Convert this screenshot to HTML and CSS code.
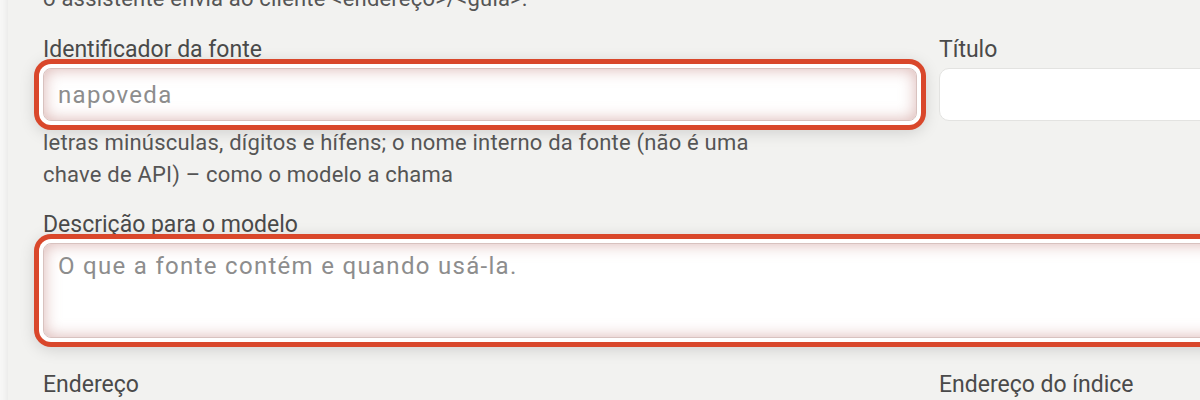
FILE: index.html
```html
<!DOCTYPE html>
<html lang="pt-BR">
<head>
    <meta charset="UTF-8">
    <meta name="viewport" content="width=device-width, initial-scale=1.0">
    <title>Nova fonte</title>
    <link rel="stylesheet" href="styles.css">
</head>
<body>
    <div class="panel">
        <p class="intro">o assistente envia ao cliente &lt;endereço&gt;/&lt;guia&gt;.</p>

        <div class="form-grid">
            <div class="field">
                <label class="field-label" for="source-id">Identificador da fonte</label>
                <input class="field-input is-invalid" id="source-id" type="text" placeholder="napoveda">
                <p class="field-help">letras minúsculas, dígitos e hífens; o nome interno da fonte (não é uma chave de API) – como o modelo a chama</p>
            </div>
            <div class="field">
                <label class="field-label" for="source-title">Título</label>
                <input class="field-input" id="source-title" type="text">
            </div>

            <div class="field field-wide">
                <label class="field-label" for="source-desc">Descrição para o modelo</label>
                <textarea class="field-input field-textarea is-invalid" id="source-desc" placeholder="O que a fonte contém e quando usá-la."></textarea>
            </div>

            <div class="field">
                <label class="field-label" for="source-url">Endereço</label>
                <input class="field-input" id="source-url" type="text">
            </div>
            <div class="field">
                <label class="field-label" for="source-index">Endereço do índice</label>
                <input class="field-input" id="source-index" type="text">
            </div>
        </div>
    </div>
</body>
</html>
```

FILE: styles.css
```css
body {
    margin: 0;
    background-color: #f7f7f6;
    font-family: Roboto, "Noto Sans", sans-serif;
    color: #4a4a4a;
    overflow: hidden;
}

.panel {
    margin-left: 8px;
    width: 1400px;
    min-height: 400px;
    padding: 0 35px;
    background-color: #f2f2f0; /* page surface */
    box-shadow: -2px 0 6px rgba(0, 0, 0, 0.06);
}

.intro {
    margin: -17px 0 0;
    font-size: 22px;
    letter-spacing: 0.2px;
    line-height: 32px;
    color: #555555;
}

.form-grid {
    display: grid;
    grid-template-columns: 874px 1fr;
    column-gap: 22px;
    margin-top: 21px;
}

.field {
    display: flex;
    flex-direction: column;
}

.field-wide {
    grid-column: 1 / -1;
    margin-top: 20px;
}

.field-wide + .field,
.field-wide + .field + .field {
    margin-top: 33px;
}

.field-label {
    font-size: 23px;
    line-height: 28px;
    color: #4a4a4a;
    margin-bottom: 4px;
}

.field-input {
    box-sizing: border-box;
    height: 53px;
    padding: 0 14px;
    border: 1px solid #e3e3e1;
    border-radius: 10px;
    background: #ffffff;
    font-family: Roboto, "Noto Sans", sans-serif;
    font-size: 24px;
    letter-spacing: 1.3px;
    color: #333333;
    outline: none;
}

.field-input::placeholder {
    color: #8d8d8d;
}

.field-textarea {
    height: 95px;
    padding: 6px 14px;
    line-height: 32px;
    resize: none;
}

/* validation error ring */
.field-input.is-invalid {
    border-color: #d8c2bf;
    border-radius: 8px;
    box-shadow:
        inset 0 0 16px rgba(190, 120, 115, 0.55),
        0 0 0 4px #ffffff,
        0 0 0 9px #d9472b,
        0 3px 16px 8px rgba(0, 0, 0, 0.15);
}

.field-help {
    max-width: 740px;
    margin: 6px 0 0;
    font-size: 22px;
    letter-spacing: 0.2px;
    line-height: 32px;
    color: #555555;
}
```
